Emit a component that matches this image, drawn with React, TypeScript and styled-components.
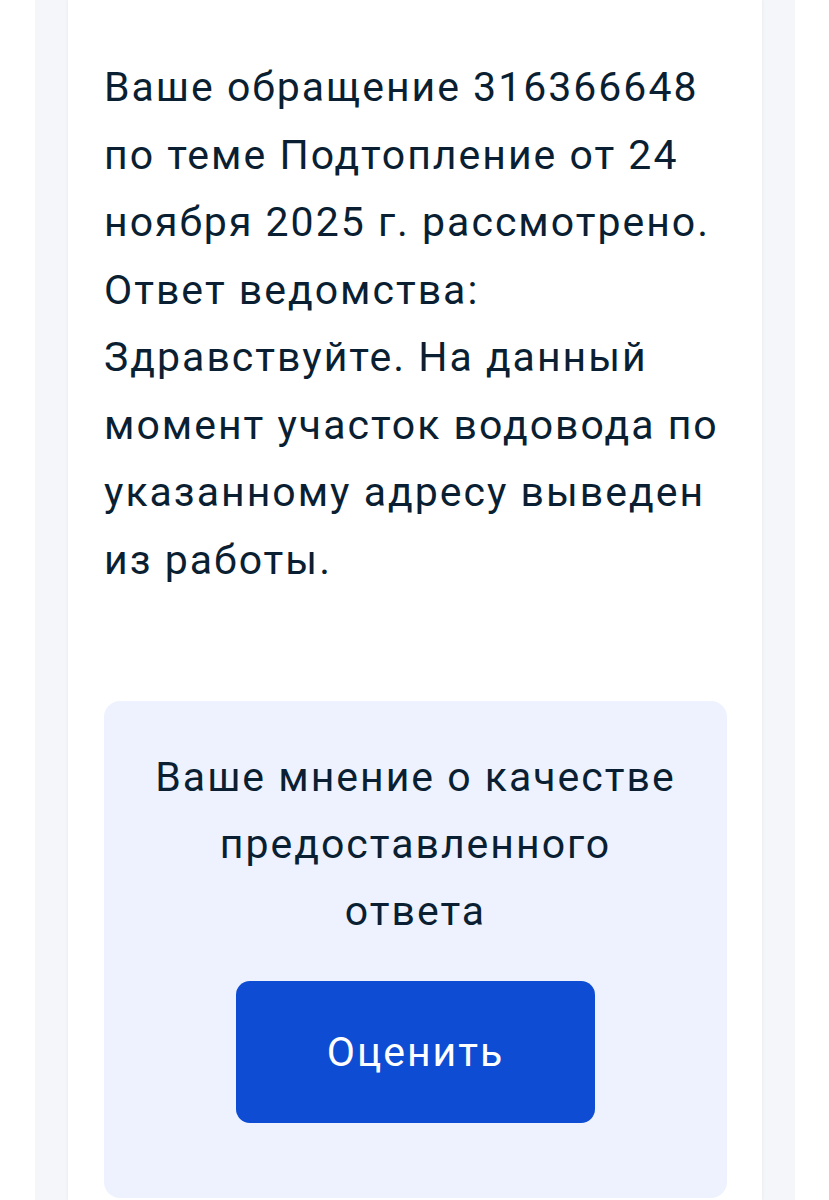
import React from "react";
import styled, { createGlobalStyle } from "styled-components";

const GlobalStyle = createGlobalStyle`
  html, body {
    margin: 0;
    padding: 0;
    background: #ffffff;
  }
  * {
    box-sizing: border-box;
  }
`;

const Page = styled.div`
  height: 1200px;
  overflow: hidden;
  padding: 0 34px 0 35px;
  background: #ffffff;
  font-family: Roboto, "Noto Sans", sans-serif;
  color: #0b1f33;
`;

const Rail = styled.div`
  height: 100%;
  padding: 0 33px;
  background: #f5f6f9;
`;

const Sheet = styled.main`
  height: 100%;
  padding: 54px 35px 0 36px;
  background: #ffffff;
  box-shadow: 0 0 3px rgba(180, 190, 205, 0.25);
`;

const Message = styled.p`
  margin: 0;
  font-size: 41px;
  line-height: 67.5px;
  letter-spacing: 2px;
  font-weight: 400;
  color: #0b1f33;
`;

const FeedbackCard = styled.section`
  margin-top: 107px;
  padding: 43px 24px 75px;
  border-radius: 16px;
  background: #edf2fe;
  display: flex;
  flex-direction: column;
  align-items: center;
`;

const FeedbackTitle = styled.h2`
  margin: 0;
  text-align: center;
  font-size: 41px;
  line-height: 67px;
  letter-spacing: 2px;
  font-weight: 400;
  color: #0b1f33;
`;

const RateButton = styled.button`
  margin-top: 36px;
  width: 359px;
  height: 142px;
  border: none;
  border-radius: 14px;
  background: #0d4cd3;
  color: #ffffff;
  font-family: Roboto, "Noto Sans", sans-serif;
  font-size: 41px;
  letter-spacing: 2px;
  font-weight: 400;
  cursor: pointer;
`;

export default function App() {
  return (
    <>
      <GlobalStyle />
      <Page>
        <Rail>
          <Sheet>
            <Message>
              Ваше обращение 316366648
              <br />
              по теме Подтопление от 24
              <br />
              ноября 2025 г. рассмотрено.
              <br />
              Ответ ведомства:
              <br />
              Здравствуйте. На данный
              <br />
              момент участок водовода по
              <br />
              указанному адресу выведен
              <br />
              из работы.
            </Message>
            <FeedbackCard>
              <FeedbackTitle>
                Ваше мнение о качестве
                <br />
                предоставленного
                <br />
                ответа
              </FeedbackTitle>
              <RateButton type="button">Оценить</RateButton>
            </FeedbackCard>
          </Sheet>
        </Rail>
      </Page>
    </>
  );
}
